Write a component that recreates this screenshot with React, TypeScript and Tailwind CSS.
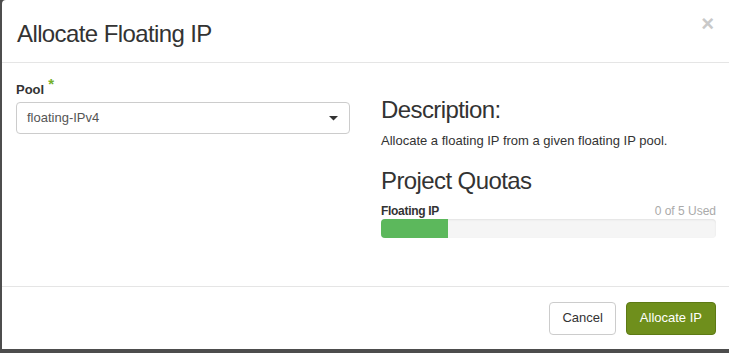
import React from "react";

export default function App() {
  return (
    <div className="w-[729px] h-[353px] bg-[#4d4d4d] overflow-hidden" style={{ fontFamily: '"Liberation Sans", Arial, sans-serif' }}>
      <div className="ml-[2px] w-[727px] h-[349px] bg-white rounded-tl-[4px] flex flex-col text-[#333]">
        <div className="h-[63px] border-b border-[#e5e5e5] flex items-start justify-between pl-[15px] pr-[15px]">
          <h1 className="mt-[20px] text-[24px] leading-[28px] tracking-[-0.6px] text-[#333]">Allocate Floating IP</h1>
          <span className="mt-[10px] text-[22px] font-bold text-[#c9c9c9] leading-[28px]">×</span>
        </div>
        <div className="flex-1 flex pl-[14px] pr-[13px] pt-[17px] border-b border-[#e5e5e5]">
          <div className="w-[334px]">
            <div className="flex items-start h-[20px]">
              <span className="text-[13px] font-bold leading-[18px] mt-[1px]">Pool</span>
              <span className="text-[#74b02a] text-[15px] font-bold ml-[4px] leading-[14px] -mt-[3px]">*</span>
            </div>
            <div className="mt-[2px] h-[32px] border border-[#ccc] rounded-[4px] flex items-center justify-between pl-[10px] pr-[11px]">
              <span className="text-[13px] text-[#555]">floating-IPv4</span>
              <svg width="9" height="5" viewBox="0 0 9 5"><path d="M0 0 L9 0 L4.5 4.5 Z" fill="#333" /></svg>
            </div>
          </div>
          <div className="ml-[31px] flex-1 pt-[16px]">
            <h2 className="text-[24px] leading-[28px] tracking-[-0.6px]">Description:</h2>
            <p className="mt-[8px] text-[13px] leading-[18px] text-[#333]">Allocate a floating IP from a given floating IP pool.</p>
            <h2 className="mt-[17px] text-[24px] leading-[28px] tracking-[-0.6px]">Project Quotas</h2>
            <div className="mt-[9px] flex justify-between items-end h-[14px] text-[12px] leading-[14px]">
              <span className="font-bold tracking-[-0.3px]">Floating IP</span>
              <span className="text-[#aaa]">0 of 5 Used</span>
            </div>
            <div className="mt-[1px] h-[19px] rounded-[4px] bg-[#f5f5f5] shadow-[inset_0_1px_2px_rgba(0,0,0,0.08)] overflow-hidden">
              <div className="h-full w-[67px] bg-[#5cb85c]" />
            </div>
          </div>
        </div>
        <div className="h-[62px] flex items-center justify-end gap-[10px] pr-[13px]">
          <button className="h-[33px] px-[12px] border border-[#ccc] rounded-[4px] bg-white text-[13px] text-[#333]">Cancel</button>
          <button className="h-[33px] px-[13px] border border-[#5d7a14] rounded-[4px] bg-[#6f8f1c] text-[13px] text-white">Allocate IP</button>
        </div>
      </div>
    </div>
  );
}
